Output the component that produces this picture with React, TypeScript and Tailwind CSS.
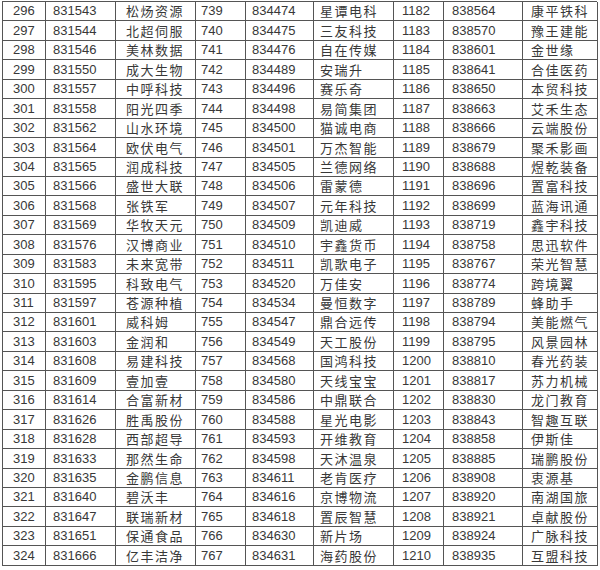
const rows: [string, string, string, string, string, string, string, string, string][] = [
  ["296", "831543", "松炀资源", "739", "834474", "星谭电科", "1182", "838564", "康平铁科"],
  ["297", "831544", "北超伺服", "740", "834475", "三友科技", "1183", "838570", "豫王建能"],
  ["298", "831546", "美林数据", "741", "834476", "自在传媒", "1184", "838601", "金世缘"],
  ["299", "831550", "成大生物", "742", "834489", "安瑞升", "1185", "838641", "合佳医药"],
  ["300", "831557", "中呼科技", "743", "834496", "赛乐奇", "1186", "838650", "本贸科技"],
  ["301", "831558", "阳光四季", "744", "834498", "易简集团", "1187", "838663", "艾禾生态"],
  ["302", "831562", "山水环境", "745", "834500", "猫诚电商", "1188", "838666", "云端股份"],
  ["303", "831564", "欧伏电气", "746", "834501", "万杰智能", "1189", "838679", "聚禾影画"],
  ["304", "831565", "润成科技", "747", "834505", "兰德网络", "1190", "838688", "煜乾装备"],
  ["305", "831566", "盛世大联", "748", "834506", "雷蒙德", "1191", "838696", "置富科技"],
  ["306", "831568", "张铁军", "749", "834507", "元年科技", "1192", "838699", "蓝海讯通"],
  ["307", "831569", "华牧天元", "750", "834509", "凯迪威", "1193", "838719", "鑫宇科技"],
  ["308", "831576", "汉博商业", "751", "834510", "宇鑫货币", "1194", "838758", "思迅软件"],
  ["309", "831583", "未来宽带", "752", "834511", "凯歌电子", "1195", "838767", "荣光智慧"],
  ["310", "831595", "科致电气", "753", "834520", "万佳安", "1196", "838774", "跨境翼"],
  ["311", "831597", "苍源种植", "754", "834534", "曼恒数字", "1197", "838789", "蜂助手"],
  ["312", "831601", "威科姆", "755", "834547", "鼎合远传", "1198", "838794", "美能燃气"],
  ["313", "831603", "金润和", "756", "834549", "天工股份", "1199", "838795", "风景园林"],
  ["314", "831608", "易建科技", "757", "834568", "国鸿科技", "1200", "838810", "春光药装"],
  ["315", "831609", "壹加壹", "758", "834580", "天线宝宝", "1201", "838817", "苏力机械"],
  ["316", "831614", "合富新材", "759", "834586", "中鼎联合", "1202", "838830", "龙门教育"],
  ["317", "831626", "胜禹股份", "760", "834588", "星光电影", "1203", "838843", "智趣互联"],
  ["318", "831628", "西部超导", "761", "834593", "开维教育", "1204", "838858", "伊斯佳"],
  ["319", "831633", "那然生命", "762", "834598", "天沐温泉", "1205", "838885", "瑞鹏股份"],
  ["320", "831635", "金鹏信息", "763", "834611", "老肯医疗", "1206", "838908", "衷源基"],
  ["321", "831640", "碧沃丰", "764", "834616", "京博物流", "1207", "838920", "南湖国旅"],
  ["322", "831647", "联瑞新材", "765", "834618", "置辰智慧", "1208", "838921", "卓献股份"],
  ["323", "831651", "保通食品", "766", "834630", "新片场", "1209", "838924", "广脉科技"],
  ["324", "831666", "亿丰洁净", "767", "834631", "海药股份", "1210", "838935", "互盟科技"],
];

// per-column left padding, and which columns hold names
const pads = ["pl-[10px]", "pl-[7px]", "pl-[10px]", "pl-[5px]", "pl-[6px]", "pl-[6px]", "pl-[8px]", "pl-[8px]", "pl-[8px]"];
const nameCols = [2, 5, 8];

export default function App() {
  return (
    <div className="w-[600px] h-[570px] bg-white overflow-hidden pt-[1px] pl-[2px]">
      <div className="grid grid-cols-[43px_70px_80px_50px_68px_80px_50px_79px_75px] w-[595px] border-l border-t border-[#555] text-[#383838]">
        {rows.map((r) =>
          r.map((v, i) => (
            <div
              key={r[0] + "-" + i}
              className={
                "h-[19.45px] flex items-center border-r border-b border-[#555] whitespace-nowrap " +
                pads[i] +
                (nameCols.includes(i)
                  ? " text-[13px] tracking-[1.5px] font-['Noto_Sans_CJK_SC',sans-serif]"
                  : " text-[13px] font-['Liberation_Sans',Arial,sans-serif]")
              }
            >
              {v}
            </div>
          ))
        )}
      </div>
    </div>
  );
}
